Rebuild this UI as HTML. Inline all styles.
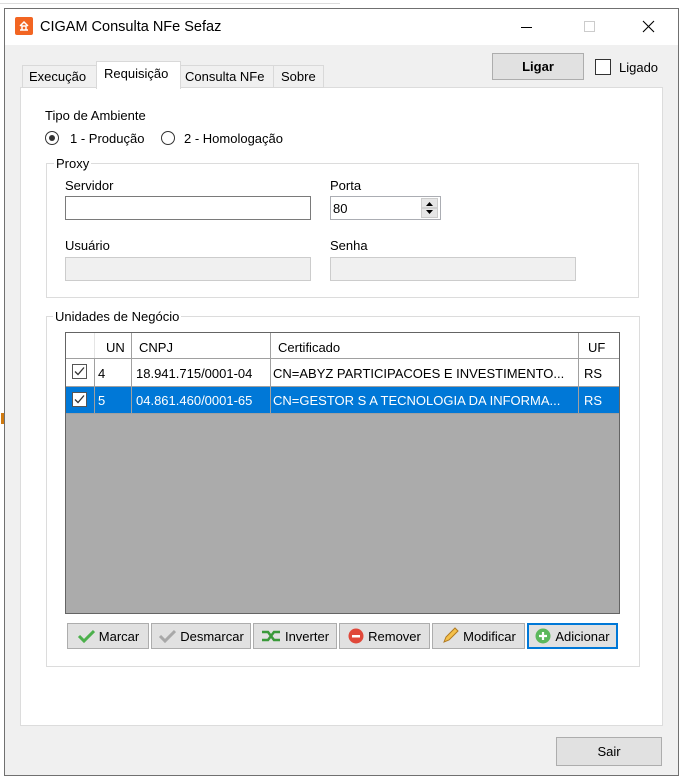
<!DOCTYPE html>
<html><head><meta charset="utf-8"><style>
*{box-sizing:border-box;margin:0;padding:0}
body{width:685px;height:784px;background:#fff;position:relative;overflow:hidden;font-family:"Liberation Sans",sans-serif;font-size:13px;color:#000}
.a{position:absolute}
.t{position:absolute;white-space:nowrap;line-height:15px}
.btn{position:absolute;background:#e1e1e1;border:1px solid #adadad;display:flex;align-items:center;justify-content:center;gap:4px;font-size:13px}
.inp{position:absolute;background:#fff;border:1px solid #7a7a7a}
.dis{position:absolute;background:#f0f0f0;border:1px solid #ccc}
.grp{position:absolute;border:1px solid #dcdcdc}
.gl{position:absolute;background:#fff;padding:0 2px;line-height:15px}
.cell{position:absolute;line-height:15px;white-space:nowrap;overflow:hidden}
.vl{position:absolute;width:1px;background:#a0a0a0}
.cb{position:absolute;width:15px;height:15px;border:1px solid #333;background:#fff}
</style></head><body>
<div class="a" style="left:0;top:3px;width:340px;height:1px;background:#ddd"></div>
<div class="a" style="left:1px;top:413px;width:3px;height:11px;background:#d07a10"></div>
<div class="a" style="left:4px;top:8px;width:675px;height:768px;border:1px solid #707070;background:#f0f0f0"></div>
<div class="a" style="left:5px;top:9px;width:673px;height:36px;background:#fff"></div>
<div class="a" style="left:15px;top:17px;width:18px;height:18px;background:#f26522;border-radius:2px"></div>
<svg class="a" style="left:15px;top:17px" width="18" height="18"><path d="M5 9l4-4 4 4M7 13V9h4v4M5 13h8" stroke="#fff" stroke-width="1.5" fill="none"/></svg>
<div class="t" style="left:40px;top:18px;font-size:14.5px;line-height:18px">CIGAM Consulta NFe Sefaz</div>
<div class="a" style="left:521px;top:27px;width:11px;height:1px;background:#000"></div>
<div class="a" style="left:584px;top:21px;width:11px;height:11px;border:1px solid #ccc"></div>
<svg class="a" style="left:642px;top:20px" width="13" height="13"><path d="M1 1L12 12M12 1L1 12" stroke="#000" stroke-width="1.1"/></svg>
<div class="btn" style="left:492px;top:53px;width:92px;height:27px;font-weight:bold;font-size:13px">Ligar</div>
<div class="cb" style="left:595px;top:59px;width:16px;height:16px;border-color:#333"></div>
<div class="t" style="left:619px;top:60px">Ligado</div>
<div class="a" style="left:20px;top:87px;width:643px;height:639px;background:#fff;border:1px solid #dcdcdc"></div>
<div class="a" style="left:22px;top:65px;width:75px;height:23px;background:#f0f0f0;border:1px solid #d9d9d9"></div>
<div class="t" style="left:29px;top:69px">Execução</div>
<div class="a" style="left:180px;top:65px;width:94px;height:23px;background:#f0f0f0;border:1px solid #d9d9d9"></div>
<div class="t" style="left:185px;top:69px">Consulta NFe</div>
<div class="a" style="left:273px;top:65px;width:51px;height:23px;background:#f0f0f0;border:1px solid #d9d9d9"></div>
<div class="t" style="left:281px;top:69px">Sobre</div>
<div class="a" style="left:96px;top:61px;width:85px;height:28px;background:#fff;border:1px solid #d9d9d9;border-bottom:none"></div>
<div class="t" style="left:104px;top:66px">Requisição</div>
<div class="t" style="left:45px;top:108px">Tipo de Ambiente</div>
<div class="a" style="left:45px;top:131px;width:14px;height:14px;border:1px solid #333;border-radius:50%;background:#fff"></div>
<div class="a" style="left:49px;top:135px;width:6px;height:6px;border-radius:50%;background:#333"></div>
<div class="t" style="left:70px;top:131px">1 - Produção</div>
<div class="a" style="left:161px;top:131px;width:14px;height:14px;border:1px solid #333;border-radius:50%;background:#fff"></div>
<div class="t" style="left:184px;top:131px">2 - Homologação</div>
<div class="grp" style="left:46px;top:163px;width:593px;height:135px"></div>
<div class="gl" style="left:54px;top:156px">Proxy</div>
<div class="t" style="left:65px;top:178px">Servidor</div>
<div class="inp" style="left:65px;top:196px;width:246px;height:24px"></div>
<div class="t" style="left:330px;top:178px">Porta</div>
<div class="inp" style="left:330px;top:196px;width:111px;height:24px;border-color:#abadb3"></div>
<div class="t" style="left:333px;top:201px">80</div>
<div class="a" style="left:421px;top:198px;width:17px;height:20px;background:#e6e6e6;border:1px solid #ccc"></div>
<svg class="a" style="left:421px;top:198px" width="17" height="20"><path d="M5 8h7l-3.5-4zM5 12h7l-3.5 4z" fill="#000"/><path d="M1 10h15" stroke="#bbb"/></svg>
<div class="t" style="left:65px;top:238px">Usuário</div>
<div class="dis" style="left:65px;top:257px;width:246px;height:24px"></div>
<div class="t" style="left:330px;top:238px">Senha</div>
<div class="dis" style="left:330px;top:257px;width:246px;height:24px"></div>
<div class="grp" style="left:46px;top:316px;width:594px;height:351px"></div>
<div class="gl" style="left:53px;top:309px">Unidades de Negócio</div>
<div class="a" style="left:65px;top:332px;width:555px;height:282px;background:#ababab;border:1px solid #646464"></div>
<div class="a" style="left:66px;top:333px;width:553px;height:80px;background:#fff"></div>
<div class="a" style="left:66px;top:386px;width:553px;height:27px;background:#0078d7"></div>
<div class="a" style="left:66px;top:358px;width:553px;height:1px;background:#a0a0a0"></div>
<div class="a" style="left:66px;top:386px;width:553px;height:1px;background:#a0a0a0"></div>
<div class="a" style="left:66px;top:413px;width:553px;height:1px;background:#a0a0a0"></div>
<div class="vl" style="left:94px;top:358px;height:55px"></div>
<div class="vl" style="left:131px;top:333px;height:80px"></div>
<div class="vl" style="left:270px;top:333px;height:80px"></div>
<div class="vl" style="left:578px;top:333px;height:80px"></div>
<div class="vl" style="left:94px;top:333px;height:25px;background:#e5e5e5"></div>
<div class="cell" style="left:106px;top:340px">UN</div>
<div class="cell" style="left:139px;top:340px">CNPJ</div>
<div class="cell" style="left:278px;top:340px">Certificado</div>
<div class="cell" style="left:588px;top:340px">UF</div>
<div class="cb" style="left:72px;top:364px;border-color:#555"></div>
<svg class="a" style="left:72px;top:364px" width="15" height="15"><path d="M3 7.5l3 3 6-7" stroke="#333" stroke-width="1.3" fill="none"/></svg>
<div class="cell" style="left:98px;top:366px">4</div>
<div class="cell" style="left:136px;top:366px">18.941.715/0001-04</div>
<div class="cell" style="left:273px;top:366px">CN=ABYZ PARTICIPACOES E INVESTIMENTO...</div>
<div class="cell" style="left:584px;top:366px">RS</div>
<div class="cb" style="left:72px;top:392px;border-color:#555"></div>
<svg class="a" style="left:72px;top:392px" width="15" height="15"><path d="M3 7.5l3 3 6-7" stroke="#333" stroke-width="1.3" fill="none"/></svg>
<div class="cell" style="left:98px;top:393px;color:#fff">5</div>
<div class="cell" style="left:136px;top:393px;color:#fff">04.861.460/0001-65</div>
<div class="cell" style="left:273px;top:393px;color:#fff">CN=GESTOR S A TECNOLOGIA DA INFORMA...</div>
<div class="cell" style="left:584px;top:393px;color:#fff">RS</div>
<div class="btn" style="left:67px;top:623px;width:82px;height:26px"><svg width="18" height="14"><path d="M2 7l5 5L17 2" stroke="#4cb04c" stroke-width="3" fill="none"/></svg>Marcar</div>
<div class="btn" style="left:151px;top:623px;width:100px;height:26px"><svg width="18" height="14"><path d="M2 7l5 5L17 2" stroke="#a8a8a8" stroke-width="3" fill="none"/></svg>Desmarcar</div>
<div class="btn" style="left:253px;top:623px;width:84px;height:26px"><svg width="20" height="14"><path d="M1 3h6l6 8h6M1 11h6l6-8h6" stroke="#3a9a3a" stroke-width="2.5" fill="none"/></svg>Inverter</div>
<div class="btn" style="left:339px;top:623px;width:91px;height:26px"><svg width="16" height="16"><circle cx="8" cy="8" r="7.5" fill="#e0483a"/><rect x="4" y="7" width="8" height="2.5" fill="#fff"/></svg>Remover</div>
<div class="btn" style="left:432px;top:623px;width:93px;height:26px"><svg width="18" height="18"><path d="M3 15l2-5L14 1l3 3-9 9z" fill="#f4c04a" stroke="#b07a20"/></svg>Modificar</div>
<div class="btn" style="left:527px;top:623px;width:91px;height:26px;border:2px solid #0078d7"><svg width="16" height="16"><circle cx="8" cy="8" r="7.5" fill="#5cb85c"/><path d="M8 4v8M4 8h8" stroke="#fff" stroke-width="2.2"/></svg>Adicionar</div>
<div class="btn" style="left:556px;top:737px;width:106px;height:29px">Sair</div>
</body></html>
